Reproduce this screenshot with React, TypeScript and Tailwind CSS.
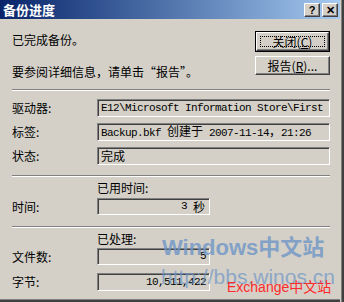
import React from "react";

const CJK = "font-['SimSun','Noto_Sans_CJK_SC',sans-serif]";
const MONO = "font-['Liberation_Mono','Noto_Sans_CJK_SC',monospace]";

function Sunken({ className = "", children }: { className?: string; children?: React.ReactNode }) {
  return (
    <div
      className={`border border-t-[#808080] border-l-[#808080] border-b-white border-r-white shadow-[inset_1px_1px_0_#404040] bg-[#d4d0c8] flex items-center ${className}`}
    >
      {children}
    </div>
  );
}

function Sep() {
  return <div className="h-[2px] border-t border-t-[#808080] border-b border-b-white" />;
}

function Btn({ children, isDefault }: { children: React.ReactNode; isDefault?: boolean }) {
  const inner = (
    <div className="h-full border border-t-white border-l-white border-b-[#404040] border-r-[#404040] shadow-[inset_-1px_-1px_0_#808080] flex items-center justify-center relative">
      {isDefault && <div className="absolute inset-[3px] border border-dotted border-black" />}
      <span className="text-[12px] leading-none text-black">{children}</span>
    </div>
  );
  if (isDefault) {
    return <div className="w-[75px] h-[21px] border border-black">{inner}</div>;
  }
  return <div className="w-[75px] h-[19px]">{inner}</div>;
}

function TitleBtn({ children }: { children: React.ReactNode }) {
  return (
    <div className="w-[16px] h-[14px] bg-[#d4d0c8] border border-t-white border-l-white border-b-[#404040] border-r-[#404040] shadow-[inset_-1px_-1px_0_#808080] flex items-center justify-center">
      <span className="text-[11px] font-bold leading-none text-black font-['Liberation_Sans',sans-serif]">{children}</span>
    </div>
  );
}

function Row({ label, children, fieldClass = "" }: { label: string; children?: React.ReactNode; fieldClass?: string }) {
  return (
    <div className="flex items-center">
      <div className="w-[85px] text-[12px] leading-[14px]">{label}</div>
      <Sunken className={fieldClass}>{children}</Sunken>
    </div>
  );
}

export default function App() {
  return (
    <div className={`w-[344px] h-[302px] flex bg-[#d4d0c8] overflow-hidden relative text-black ${CJK}`}>
      <div className="flex-1 flex flex-col">
        {/* title bar */}
        <div className="h-[19px] bg-gradient-to-r from-[#0a246a] to-[#a6caf0] flex items-center pl-[3px] pr-[2px]">
          <span className="text-white font-bold text-[13px] leading-none">备份进度</span>
          <div className="ml-auto flex gap-[2px] mt-[1px]">
            <TitleBtn>?</TitleBtn>
            <TitleBtn>✕</TitleBtn>
          </div>
        </div>

        {/* body */}
        <div className="flex-1 pl-[12px] pr-[10px] pt-[12px]">
          <div className="flex">
            <div className="flex-1 text-[12px]">
              <div className="mt-[1px] leading-[16px]">已完成备份。</div>
              <div className="mt-[16px] leading-[16px]">要参阅详细信息，请单击“报告”。</div>
            </div>
            <div className="flex flex-col gap-[4px]">
              <Btn isDefault>
                关闭(<span className="underline">C</span>)
              </Btn>
              <Btn>
                报告(<span className="underline">R</span>)...
              </Btn>
            </div>
          </div>

          <div className="mt-[9px]">
            <Sep />
          </div>

          <div className="mt-[8px] flex flex-col gap-[6px]">
            <Row label="驱动器:" fieldClass="flex-1 h-[18px]">
              <span className={`${MONO} text-[11px] tracking-[-0.6px] pl-[3px] whitespace-nowrap`}>
                E12\Microsoft Information Store\First
              </span>
            </Row>
            <Row label="标签:" fieldClass="flex-1 h-[18px]">
              <span className={`${MONO} text-[11px] tracking-[-0.6px] pl-[3px] whitespace-nowrap`}>
                Backup.bkf <span className={`${CJK} text-[12px] tracking-normal`}>创建于</span> 2007-11-14<span className={`${CJK} text-[12px] tracking-normal`}>，</span>21:26
              </span>
            </Row>
            <Row label="状态:" fieldClass="flex-1 h-[18px]">
              <span className="text-[12px] pl-[3px]">完成</span>
            </Row>
          </div>

          <div className="mt-[10px]">
            <Sep />
          </div>

          <div className="mt-[4px] pl-[85px] text-[12px] leading-[14px]">已用时间:</div>
          <div className="mt-[3px]">
            <Row label="时间:" fieldClass="w-[113px] h-[17px] justify-end pr-[4px]">
              <span className={`${MONO} text-[11px] tracking-[-0.6px] mr-[6px]`}>3</span>
              <span className="text-[12px]">秒</span>
            </Row>
          </div>

          <div className="mt-[11px]">
            <Sep />
          </div>

          <div className="mt-[4px] pl-[85px] text-[12px] leading-[14px]">已处理:</div>
          <div className="mt-[2px]">
            <Row label="文件数:" fieldClass="w-[113px] h-[17px] justify-end pr-[3px]">
              <span className={`${MONO} text-[11px] tracking-[-0.6px]`}>5</span>
            </Row>
          </div>
          <div className="mt-[8px]">
            <Row label="字节:" fieldClass="w-[113px] h-[18px] justify-end pr-[3px]">
              <span className={`${MONO} text-[11px] tracking-[-0.6px]`}>10,511,422</span>
            </Row>
          </div>
        </div>

        {/* bottom frame */}
        <div className="h-[4px] border-b-2 border-b-[#404040] shadow-[inset_0_-1px_0_#808080]" />
      </div>

      {/* right frame */}
      <div className="w-[4px] border-r-2 border-r-[#404040] shadow-[inset_-1px_0_0_#808080]" />

      {/* watermarks */}
      <div className="absolute left-[162px] top-[237px] text-[22px] font-bold leading-none text-[#6f96c6] opacity-80 font-['Liberation_Sans','Noto_Sans_CJK_SC',sans-serif] whitespace-nowrap pointer-events-none">
        Windows中文站
      </div>
      <div className="absolute left-[161px] top-[266px] text-[21px] leading-none text-[#6f96c6] opacity-70 font-['Liberation_Sans',sans-serif] whitespace-nowrap pointer-events-none">
        http://bbs.winos.cn
      </div>
      <div className="absolute left-[227px] top-[280px] text-[14px] leading-none text-[#ff2a2a] font-['Liberation_Sans','Noto_Sans_CJK_SC',sans-serif] whitespace-nowrap pointer-events-none">
        Exchange中文站
      </div>
    </div>
  );
}
